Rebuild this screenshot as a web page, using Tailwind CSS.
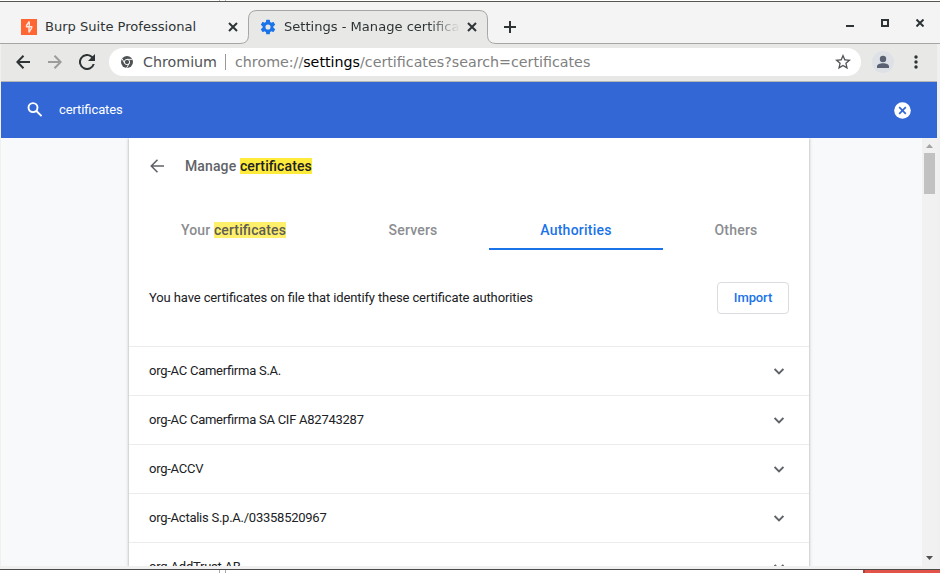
<!DOCTYPE html>
<html lang="en">
<head>
<meta charset="utf-8">
<title>Settings - Manage certificates</title>
<script src="https://cdn.jsdelivr.net/npm/@tailwindcss/browser@4"></script>
</head>
<body class="w-[940px] h-[573px] overflow-hidden bg-[#f0f0f0] flex flex-col font-[Roboto,sans-serif] text-[13px] text-[#202124] [font-feature-settings:'liga'_1]">
  <div class="h-px shrink-0 bg-white flex"><i class="ml-[219px] w-px bg-[#bbb]"></i><i class="ml-[5px] w-px bg-[#bbb]"></i></div>
  <div class="h-px shrink-0 bg-[#555753]"></div>

  <!-- Tab strip -->
  <header class="relative h-[42px] shrink-0 bg-[#f4f4f4] font-['DejaVu_Sans',sans-serif] text-[13.070px] text-[#2e3436]">
    <svg class="absolute inset-0" width="940" height="42" fill="none">
      <path d="M240 42q8 0 8-8V17q0-8.500 8.500-8.500h222.500q8.500 0 8.500 8.500v17q0 8 8 8z" fill="#e8e8e6"/>
      <path d="M0 41.500h240q8.500 0 8.500-8V17q0-8.500 8.500-8.500h222q8.500 0 8.500 8.500v16.500q0 8 8.500 8h444" stroke="#a6a6a4"/>
    </svg>
    <div class="relative flex h-full items-center pb-[1px]">
      <div class="flex items-center w-[248px] h-full pl-[21px] pt-[8px]">
        <svg width="16" height="16" class="shrink-0"><path fill="#ff6633" d="M0 0h16v16H0z"/><path fill="none" stroke="#fff" stroke-width="1.400" d="M8.300 2.500L5.500 6.500v1.200h5.200v1.100L8 13.500M8.300 2.500v5M8 8.500v5" stroke-opacity=".85"/></svg>
        <span class="ml-2 whitespace-nowrap w-[183px]">Burp Suite Professional</span>
        <svg width="10" height="10" class="shrink-0" stroke="#2e3436" stroke-width="2"><path d="M1 1l8 8M9 1L1 9"/></svg>
      </div>
      <div class="flex items-center w-[240px] h-full pl-[12px] pt-[8px]">
        <svg width="16" height="16" viewBox="1 1 22 22" class="shrink-0"><path fill="#1a73e8" d="M19.430 12.980c.04-.32.070-.64.070-.98s-.03-.66-.07-.98l2.110-1.650a.5.5 0 0 0 .12-.64l-2-3.460a.5.5 0 0 0-.61-.22l-2.490 1a7.300 7.300 0 0 0-1.690-.98l-.38-2.650A.49.49 0 0 0 14 2h-4a.49.49 0 0 0-.49.420l-.38 2.650c-.61.250-1.170.590-1.690.98l-2.490-1a.49.49 0 0 0-.61.220l-2 3.460a.49.49 0 0 0 .12.640l2.110 1.650a8 8 0 0 0 0 1.960l-2.110 1.650a.5.5 0 0 0-.12.640l2 3.460c.12.220.390.3.610.220l2.490-1c.52.4 1.080.73 1.690.98l.38 2.650c.03.240.240.420.490.420h4c.25 0 .46-.18.49-.42l.38-2.650a7.300 7.300 0 0 0 1.690-.98l2.490 1c.23.090.49 0 .61-.22l2-3.460a.5.5 0 0 0-.12-.64zM12 15.500a3.500 3.500 0 1 1 0-7 3.500 3.500 0 0 1 0 7z"/></svg>
        <span class="ml-2 whitespace-nowrap overflow-hidden w-[176px] mask-r-from-82% mask-r-to-100%">Settings - Manage certificates</span>
        <svg width="10" height="10" class="shrink-0 ml-[7px]" stroke="#2e3436" stroke-width="2"><path d="M1 1l8 8M9 1L1 9"/></svg>
      </div>
      <svg width="12" height="12" class="ml-4 mt-[9px]" stroke="#2e3436" stroke-width="2"><path d="M6 0v12M0 6h12"/></svg>
      <div class="ml-auto flex gap-[27px] pr-[16px]">
        <svg width="8" height="8"><path fill="#2e3436" d="M0 6h8v2H0z"/></svg>
        <svg width="8" height="8" fill="none" stroke="#2e3436" stroke-width="2"><path d="M1 1h6v6H1z"/></svg>
        <svg width="8" height="8" fill="none" stroke="#2e3436" stroke-width="2"><path d="M.5.5l7 7M7.500.5l-7 7"/></svg>
      </div>
    </div>
  </header>

  <!-- Toolbar -->
  <div class="h-[38px] shrink-0 ml-px mr-[3px] bg-[#e8e8e6] border-b border-[#b6b6b4] flex items-center pb-px font-['DejaVu_Sans',sans-serif] text-[14.250px]">
    <svg width="14" height="14" class="ml-[15px]" fill="none" stroke="#2e3436" stroke-width="2"><path d="M14 7H1.500M7.500.8L1.300 7l6.200 6.200"/></svg>
    <svg width="14" height="14" class="ml-[18px]" fill="none" stroke="#9b9d9c" stroke-width="2"><path d="M0 7h12.500M6.500.8L12.700 7l-6.200 6.200"/></svg>
    <svg width="16" height="16" viewBox="4 4 16 16" class="ml-[17px]"><path fill="#2e3436" d="M17.650 6.350A8 8 0 1 0 19.730 14h-2.080A6 6 0 1 1 12 6c1.660 0 3.140.69 4.220 1.780L13 11h7V4z"/></svg>
    <div class="ml-[14px] w-[752px] h-7 bg-white rounded-full flex items-center pl-3 text-[#808080] whitespace-nowrap">
      <svg width="12" height="12" viewBox="0 0 24 24"><circle cx="12" cy="12" r="12" fill="#505355"/><g stroke="#fff" stroke-width="1.800" fill="none"><circle cx="12" cy="12" r="5.300"/><path d="M12 6.700h11M7.400 14.700L2 5.300M16.600 14.700L11 24"/></g></svg>
      <span class="ml-[10px] pt-[2px] w-[75px] text-[#505355]">Chromium</span>
      <i class="w-px h-4 ml-[7px] bg-[#999]"></i>
      <span class="flex-1 ml-[9px] pt-[2px]">chrome://<span class="text-black">settings</span>/certificates?search=certificates</span>
      <svg width="16" height="16" viewBox="2 2 20 20" class="mr-[10px]"><path fill="#505355" d="M22 9.240l-7.190-.62L12 2 9.190 8.630 2 9.240l5.460 4.730L5.820 21 12 17.270 18.180 21l-1.630-7.030zM12 15.400l-3.760 2.270 1-4.280-3.320-2.880 4.380-.38L12 6.100l1.710 4.040 4.380.38-3.320 2.880 1 4.280z"/></svg>
    </div>
    <svg width="22" height="22" class="ml-[11px]"><circle cx="11" cy="11" r="11" fill="#dee1e6"/><circle cx="11" cy="8" r="3.200" fill="#5a6173"/><path fill="#5a6173" d="M5 17v-1.500C5 13.500 8 12.300 11 12.300s6 1.200 6 3.200V17z"/></svg>
    <svg width="4" height="14" class="ml-[20px]" fill="#2e3436"><circle cx="2" cy="2" r="1.700"/><circle cx="2" cy="7" r="1.700"/><circle cx="2" cy="12" r="1.700"/></svg>
  </div>

  <!-- Search bar -->
  <div class="h-14 shrink-0 ml-px mr-[3px] bg-[#3367d6] text-white flex items-center pl-[26px] pr-[26px]">
    <svg width="15" height="15" class="-mt-px" fill="none" stroke="#fff" stroke-width="1.900"><circle cx="6" cy="5.600" r="4.500"/><path d="M9.400 9l5.200 5.200"/></svg>
    <span class="ml-[17px] tracking-[-0.1px]">certificates</span>
    <svg width="17" height="17" class="ml-auto"><circle cx="8.500" cy="8.500" r="8.300" fill="#fff"/><path d="M5.200 5.200l6.600 6.600M11.800 5.200l-6.600 6.600" stroke="#3367d6" stroke-width="1.700"/></svg>
  </div>

  <!-- Page content -->
  <main class="h-[428px] shrink-0 ml-px mr-[3px] bg-[#f8f9fa] flex overflow-hidden">
    <section class="ml-32 w-[680px] h-[480px] shrink-0 bg-white shadow-[0_1px_2px_0_rgba(60,64,67,0.3),0_1px_3px_1px_rgba(60,64,67,0.15)]">
      <div class="h-14 flex items-center pl-[21px] text-[14px] font-medium text-[#5f6368] tracking-[0.12px]">
        <svg width="14" height="14" fill="none" stroke="#5f6368" stroke-width="1.600"><path d="M14 7H1.500M7.500.8L1.300 7l6.200 6.200"/></svg>
        <h1 class="ml-[21px]">Manage <mark class="bg-[#ffeb3b] text-[#202124]">certificates</mark></h1>
      </div>
      <nav class="mt-4 h-10 flex text-[14px] font-medium text-[#8b8d90] text-center leading-10">
        <div class="w-[208px] pl-px tracking-[0.12px]">Your <mark class="bg-[#fff06b] text-[#5e5d55]">certificates</mark></div>
        <div class="w-[152px] tracking-[0.2px]">Servers</div>
        <div class="w-[174px] text-[#1a73e8] border-b-2 border-[#1a73e8] tracking-[0.25px]">Authorities</div>
        <div class="w-[146px] tracking-[0.2px]">Others</div>
      </nav>
      <div class="h-24 flex items-center justify-between pl-5 pr-5">
        <span class="tracking-[-0.115px]">You have certificates on file that identify these certificate authorities</span>
        <button class="w-[72px] h-8 rounded border border-[#dadce0] text-[#1a73e8] font-medium tracking-[-0.1px]">Import</button>
      </div>
      <ul class="tracking-[-0.250px]">
        <li class="h-[49px] border-t border-[#ececec] flex items-center justify-between pl-5 pr-[25px]">org-AC Camerfirma S.A.<svg width="10" height="7" fill="none" stroke="#5f6368" stroke-width="1.900"><path d="M.6 1L5 5.400 9.400 1"/></svg></li>
        <li class="h-[49px] border-t border-[#ececec] flex items-center justify-between pl-5 pr-[25px]">org-AC Camerfirma SA CIF A82743287<svg width="10" height="7" fill="none" stroke="#5f6368" stroke-width="1.900"><path d="M.6 1L5 5.400 9.400 1"/></svg></li>
        <li class="h-[49px] border-t border-[#ececec] flex items-center justify-between pl-5 pr-[25px]">org-ACCV<svg width="10" height="7" fill="none" stroke="#5f6368" stroke-width="1.900"><path d="M.6 1L5 5.400 9.400 1"/></svg></li>
        <li class="h-[49px] border-t border-[#ececec] flex items-center justify-between pl-5 pr-[25px]">org-Actalis S.p.A./03358520967<svg width="10" height="7" fill="none" stroke="#5f6368" stroke-width="1.900"><path d="M.6 1L5 5.400 9.400 1"/></svg></li>
        <li class="h-[49px] border-t border-[#ececec] flex items-center justify-between pl-5 pr-[25px]">org-AddTrust AB<svg width="10" height="7" fill="none" stroke="#5f6368" stroke-width="1.900"><path d="M.6 1L5 5.400 9.400 1"/></svg></li>
      </ul>
    </section>
    <div class="ml-auto w-[15px] bg-[#f1f1f1] flex flex-col items-center">
      <svg width="7" height="4" class="mt-[6px] shrink-0"><path fill="#a3a3a3" d="M0 4L3.500 0 7 4z"/></svg>
      <div class="mt-[5px] w-[11px] h-[41px] bg-[#c1c1c1]"></div>
      <svg width="7" height="4" class="mt-auto mb-[6px]"><path fill="#505050" d="M0 0h7L3.500 4z"/></svg>
    </div>
  </main>
  <div class="h-[3px] shrink-0"></div>
  <div class="h-px shrink-0 bg-[#4a4a4a]"></div>
  <div class="h-[3px] shrink-0 bg-white flex"><i class="ml-[219px] w-px bg-[#aaa]"></i><i class="ml-[5px] w-px bg-[#aaa]"></i><i class="ml-auto w-[77px] bg-[#e2544a] border-l-2 border-[#a8433c]"></i></div>
</body>
</html>
